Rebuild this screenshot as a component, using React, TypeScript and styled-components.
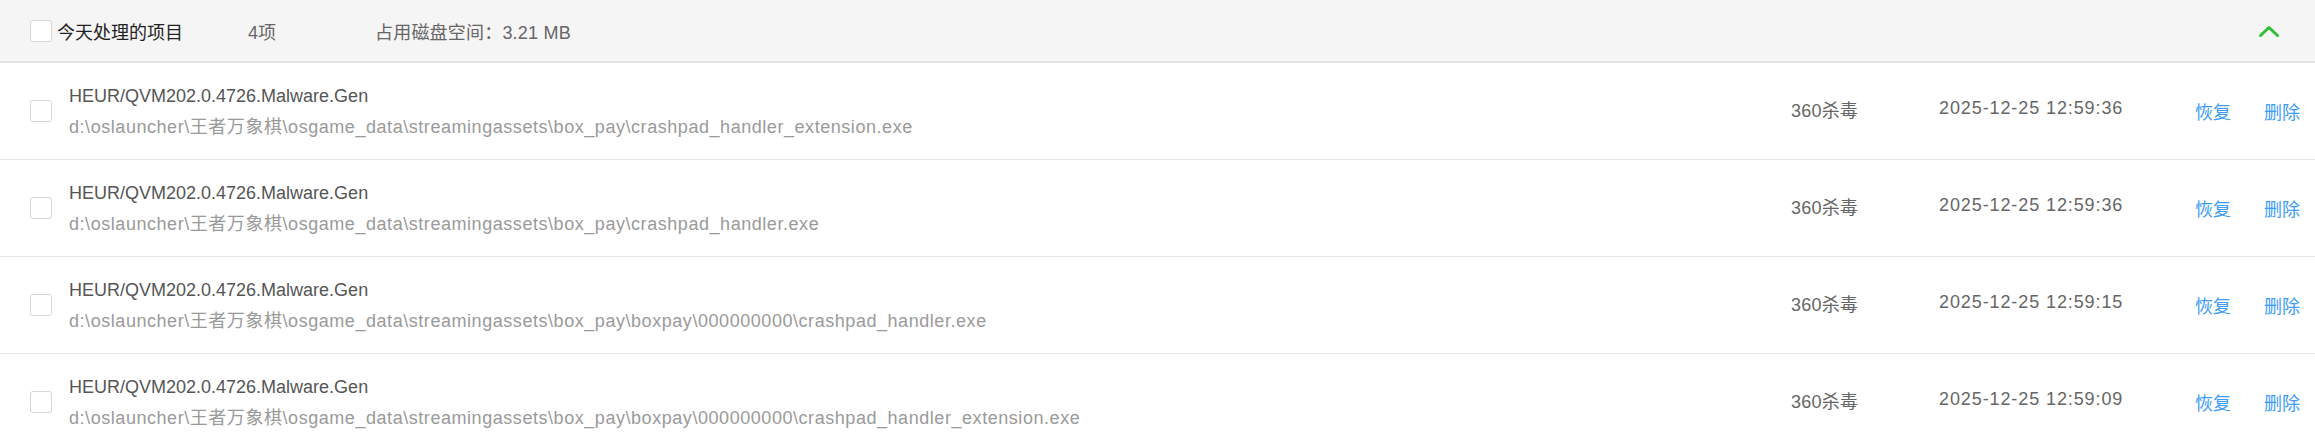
import React from 'react'
import styled, { createGlobalStyle } from 'styled-components'

const GlobalStyle = createGlobalStyle`
	html, body {
		margin: 0;
		padding: 0;
		background: #ffffff;
	}
	body {
		font-family: 'Liberation Sans', 'Noto Sans CJK SC', sans-serif;
	}
`

type Item = {
	id: number
	name: string
	path: string
	source: string
	time: string
}

const items: Item[] = [
	{
		id: 1,
		name: 'HEUR/QVM202.0.4726.Malware.Gen',
		path: 'd:\\oslauncher\\王者万象棋\\osgame_data\\streamingassets\\box_pay\\crashpad_handler_extension.exe',
		source: '360杀毒',
		time: '2025-12-25 12:59:36',
	},
	{
		id: 2,
		name: 'HEUR/QVM202.0.4726.Malware.Gen',
		path: 'd:\\oslauncher\\王者万象棋\\osgame_data\\streamingassets\\box_pay\\crashpad_handler.exe',
		source: '360杀毒',
		time: '2025-12-25 12:59:36',
	},
	{
		id: 3,
		name: 'HEUR/QVM202.0.4726.Malware.Gen',
		path: 'd:\\oslauncher\\王者万象棋\\osgame_data\\streamingassets\\box_pay\\boxpay\\000000000\\crashpad_handler.exe',
		source: '360杀毒',
		time: '2025-12-25 12:59:15',
	},
	{
		id: 4,
		name: 'HEUR/QVM202.0.4726.Malware.Gen',
		path: 'd:\\oslauncher\\王者万象棋\\osgame_data\\streamingassets\\box_pay\\boxpay\\000000000\\crashpad_handler_extension.exe',
		source: '360杀毒',
		time: '2025-12-25 12:59:09',
	},
]

const App = () => {
	return (
		<>
			<GlobalStyle />
			<Panel>
				<GroupHeader>
					<CheckBox />
					<GroupTitle>今天处理的项目</GroupTitle>
					<GroupCount>4项</GroupCount>
					<GroupSize>占用磁盘空间：3.21 MB</GroupSize>
					<Collapse aria-label="收起">
						<svg width="22" height="14" viewBox="0 0 22 14">
							<path
								d="M2.5 11.5 L11 3.5 L19.5 11.5"
								fill="none"
								stroke="#2fbf2f"
								strokeWidth="3"
								strokeLinecap="round"
								strokeLinejoin="round"
							/>
						</svg>
					</Collapse>
				</GroupHeader>

				{items.map((item) => (
					<Row key={item.id}>
						<CheckBox />
						<Info>
							<Name>{item.name}</Name>
							<FilePath>{item.path}</FilePath>
						</Info>
						<Cell>{item.source}</Cell>
						<Cell $wide>{item.time}</Cell>
						<Action>恢复</Action>
						<Action>删除</Action>
					</Row>
				))}
			</Panel>
		</>
	)
}

export default App

const Panel = styled.div`
	display: flex;
	flex-direction: column;
	width: 100%;
	font-size: 18px;
`

const GroupHeader = styled.div`
	display: flex;
	align-items: center;
	height: 61px;
	padding: 0 35px 0 30px;
	background: #f5f5f5;
	border-bottom: 2px solid #e3e3e3;
`

const CheckBox = styled.span`
	display: block;
	flex-shrink: 0;
	width: 20px;
	height: 20px;
	background: #ffffff;
	border: 1px solid #d6d6d6;
	border-radius: 3px;
	box-sizing: content-box;
`

const GroupTitle = styled.span`
	width: 191px;
	margin-left: 5px;
	color: #222;
`

const GroupCount = styled.span`
	width: 127px;
	color: #666;
`

const GroupSize = styled.span`
	flex: 1;
	color: #666;
	letter-spacing: 0.2px;
`

const Collapse = styled.span`
	display: flex;
	align-items: center;
	margin-top: 1px;
`

const Row = styled.div`
	display: grid;
	grid-template-columns: 22px 1fr 148px 256px 69px auto;
	align-items: center;
	height: 96px;
	padding: 0 15px 0 30px;
	border-bottom: 1px solid #e6e6e6;
`

const Info = styled.div`
	display: flex;
	flex-direction: column;
	gap: 9px;
	margin-left: 17px;
	line-height: 22px;
`

const Name = styled.div`
	color: #555;
`

const FilePath = styled.div`
	color: #9a9a9a;
	white-space: nowrap;
	letter-spacing: 0.55px;
`

const Cell = styled.div<{ $wide?: boolean }>`
	color: #666;
	white-space: nowrap;
	margin-top: -5px;
	letter-spacing: ${(p) => (p.$wide ? '0.9px' : '0.2px')};
`

const Action = styled.a`
	color: #3d9cf5;
	cursor: pointer;
	white-space: nowrap;
`
